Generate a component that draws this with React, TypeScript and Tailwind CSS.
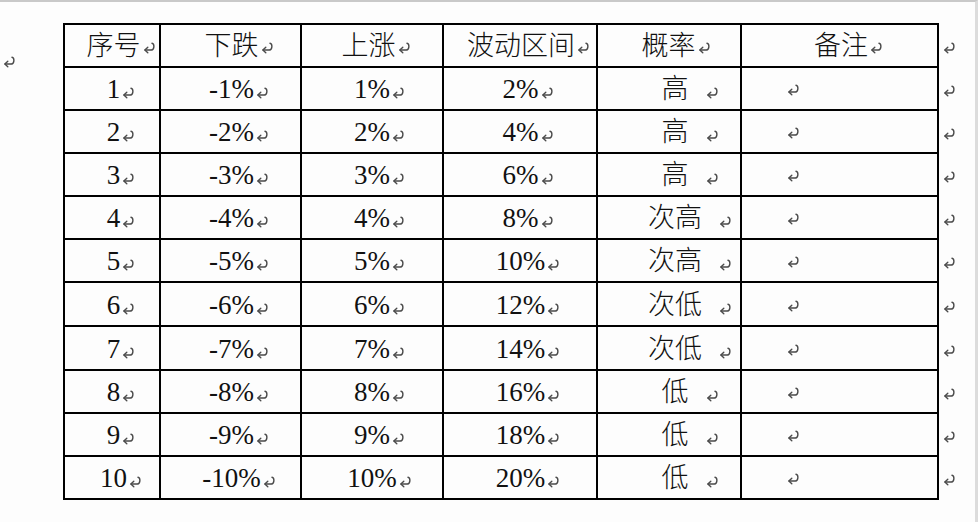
import React from "react";

const Mark = ({ className = "" }: { className?: string }) => (
  <svg
    width="13"
    height="12"
    viewBox="0 0 13 12"
    className={"shrink-0 " + className}
    fill="none"
    stroke="#4a4a4a"
    strokeWidth="1.4"
    strokeLinecap="round"
    strokeLinejoin="round"
  >
    <path d="M9 1.3 C11.6 1.7 11.6 7.6 8.5 8 L2 8" />
    <path d="M4.8 5.2 L1.9 8 L4.8 10.8" />
  </svg>
);

const widths = ["w-[98px] border-l-2", "w-[141px]", "w-[142px]", "w-[154px]", "w-[144px]", "w-[197px]"];
const headerPad = ["pl-[18px]", "pl-[17px]", "pl-[8px]", "pl-[17px]", "pl-[14px]", "pl-[18px]"];
const dataPad = ["pl-[18px]", "pl-[17px]", "pl-[15px]", "pl-[16px]", "pl-[42px]", ""];

const headers = ["序号", "下跌", "上涨", "波动区间", "概率", "备注"];
const probs = ["高", "高", "高", "次高", "次高", "次低", "次低", "低", "低", "低"];

const rows = Array.from({ length: 10 }, (_, i) => {
  const n = i + 1;
  return [String(n), `-${n}%`, `${n}%`, `${2 * n}%`, probs[i]];
});

export default function App() {
  return (
    <div
      className="w-[978px] h-[522px] bg-[#fdfdfd] border-t-2 border-[#c9c9c9] border-r-[3px] border-r-[#dcdcdc] overflow-hidden text-[#111]"
      style={{ fontFamily: '"Liberation Serif", "Noto Sans CJK SC", serif' }}
    >
      <div className="flex pt-[21px]">
        <div className="w-[63px] shrink-0">
          <Mark className="mt-[33px] ml-[3px]" />
        </div>
        <div className="flex flex-col">
          {/* header */}
          <div className="flex h-[45px]">
            {headers.map((h, c) => (
              <div
                key={c}
                className={`${widths[c]} ${headerPad[c]} border-t-2 border-r-2 border-b-2 border-black flex items-center justify-center`}
              >
                <div className="flex items-baseline text-[27px] font-light leading-none gap-[2px] pt-[2px]">
                  <span>{h}</span>
                  <Mark className="relative -top-[1px]" />
                </div>
              </div>
            ))}
            <div className="flex items-center pl-[4px] pt-[4px]">
              <Mark />
            </div>
          </div>
          {rows.map((r, ri) => (
            <div key={ri} className={`flex ${ri === 5 || ri === 6 ? "h-[44px]" : "h-[43px]"}`}>
              {r.map((v, c) => (
                <div
                  key={c}
                  className={`${widths[c]} ${dataPad[c]} border-r-2 border-b-2 border-black flex items-center justify-center`}
                >
                  <div
                    className={`flex items-baseline text-[27px] leading-none pt-[2px] ${
                      c === 4 ? "gap-[17px] font-light" : "gap-[2px]"
                    }`}
                  >
                    <span>{v}</span>
                    <Mark className="relative top-[1px]" />
                  </div>
                </div>
              ))}
              <div className={`${widths[5]} border-r-2 border-b-2 border-black flex items-center pl-[45px]`}>
                <Mark className="mt-[3px]" />
              </div>
              <div className="flex items-center pl-[4px] pt-[3px]">
                <Mark />
              </div>
            </div>
          ))}
        </div>
      </div>
    </div>
  );
}
